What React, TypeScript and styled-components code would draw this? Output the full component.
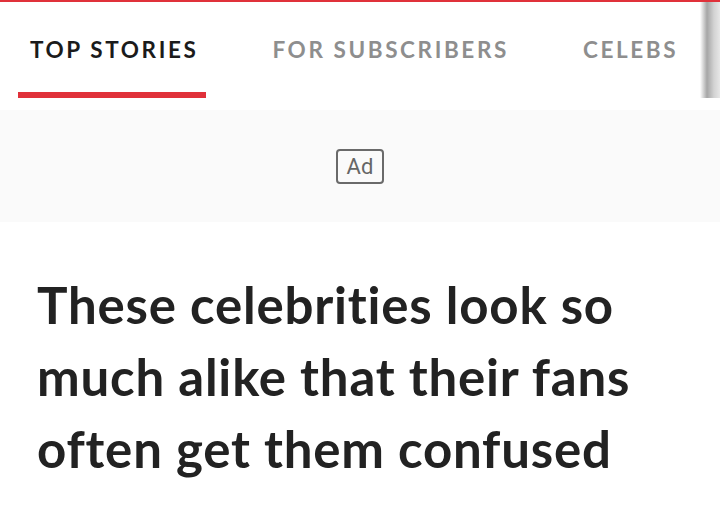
import React from "react";
import styled, { createGlobalStyle } from "styled-components";

const Global = createGlobalStyle`
  html, body { margin: 0; padding: 0; background: #ffffff; }
  body { width: 720px; height: 508px; overflow: hidden; }
  * { box-sizing: border-box; }
`;

const Page = styled.div`
  width: 720px;
  height: 508px;
  overflow: hidden;
  background: #ffffff;
  display: flex;
  flex-direction: column;
`;

const NavBar = styled.nav`
  position: relative;
  height: 98px;
  border-top: 2px solid #e0313a;
  display: flex;
  align-items: stretch;
  padding-left: 18px;
  gap: 54px;
  overflow: hidden;
`;

const Tab = styled.div<{ $active?: boolean }>`
  display: flex;
  align-items: center;
  padding: 4px 8px 0 12px;
  height: 96px;
  border-bottom: 6px solid ${(p) => (p.$active ? "#e0313a" : "transparent")};
  font-family: "Lato", "Open Sans", sans-serif;
  font-weight: 700;
  font-size: 22.5px;
  letter-spacing: 2.6px;
  white-space: nowrap;
  color: ${(p) => (p.$active ? "#1b1b1b" : "#8e8e8e")};
`;

const Fade = styled.div`
  position: absolute;
  top: 0;
  right: 0;
  width: 20px;
  height: 96px;
  background: linear-gradient(
    to right,
    rgba(255, 255, 255, 0) 0%,
    rgba(150, 150, 150, 0.85) 35%,
    rgba(200, 200, 200, 0.8) 70%,
    rgba(225, 225, 225, 0.8) 100%
  );
`;

const AdArea = styled.div`
  margin-top: 12px;
  height: 112px;
  background: #fafafa;
  display: flex;
  align-items: center;
  justify-content: center;
`;

const AdBadge = styled.div`
  width: 48px;
  height: 35px;
  border: 2px solid #6a6a6a;
  border-radius: 4px;
  display: flex;
  align-items: center;
  justify-content: center;
  font-family: "Roboto", "Open Sans", sans-serif;
  font-weight: 400;
  font-size: 22px;
  color: #666666;
  line-height: 1;
  padding-top: 1px;
`;

const Headline = styled.h1`
  margin: 0;
  padding: 47px 40px 0 37px;
  font-family: "Lato", "Open Sans", sans-serif;
  font-weight: 700;
  font-size: 51px;
  line-height: 72px;
  color: #222222;
  letter-spacing: 0.8px;
  font-variant-ligatures: none;
  font-feature-settings: "liga" 0;
`;

export default function App() {
  return (
    <Page>
      <Global />
      <NavBar>
        <Tab $active>TOP STORIES</Tab>
        <Tab>FOR SUBSCRIBERS</Tab>
        <Tab>CELEBS</Tab>
        <Fade />
      </NavBar>
      <AdArea>
        <AdBadge>Ad</AdBadge>
      </AdArea>
      <Headline>
        These celebrities look so much alike that their fans often get them confused
      </Headline>
    </Page>
  );
}
